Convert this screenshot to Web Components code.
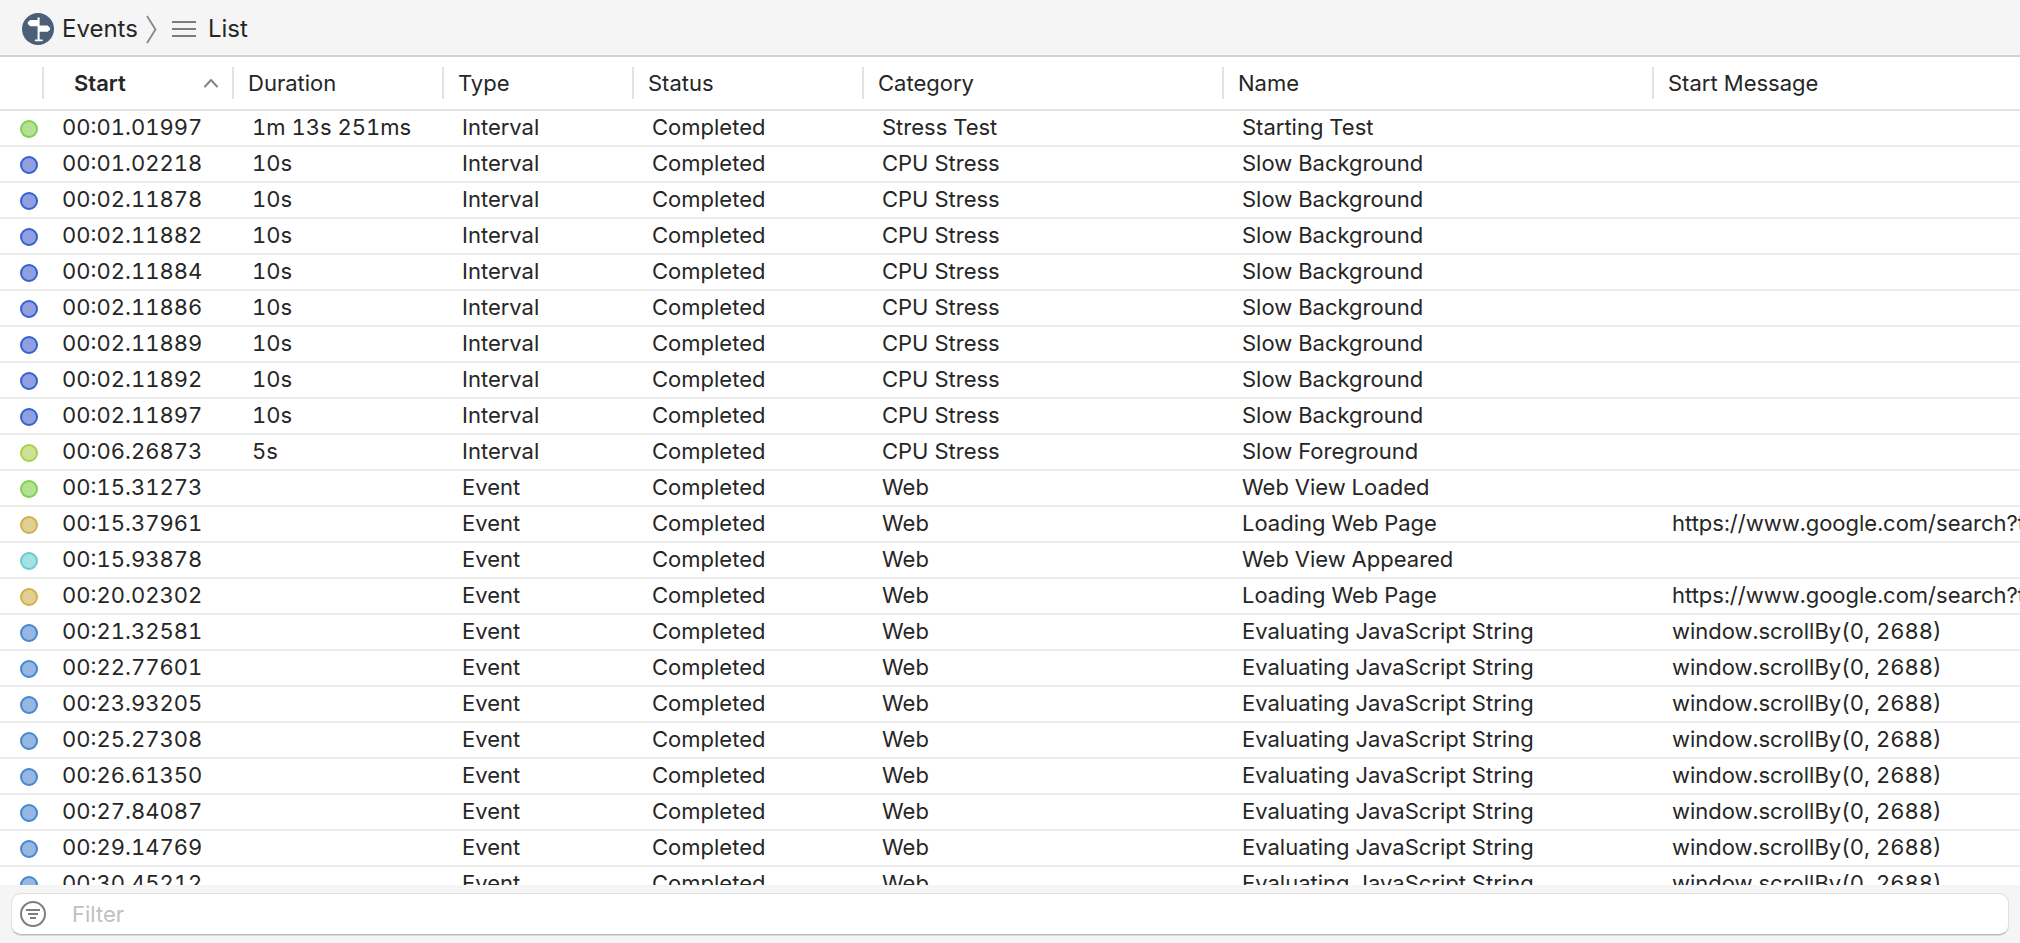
<!DOCTYPE html>
<html lang="en">
<head>
<meta charset="utf-8">
<title>Events – List</title>
<style>
  html, body { height: 100%; margin: 0; }
  body {
    font: 22px/28px Inter, "Liberation Sans", sans-serif;
    color: #262626;
    background: #fff;
  }
</style>
</head>
<body>
<event-window>
  <crumb-bar slot="top">
    <crumb-item href="#events" label="Events">
      <signpost-icon></signpost-icon>
    </crumb-item>
    <crumb-item href="#list" label="List">
      <lines-icon></lines-icon>
    </crumb-item>
  </crumb-bar>
  <event-table></event-table>
  <filter-bar slot="bottom"></filter-bar>
</event-window>

<script>
  class BaseElement extends HTMLElement {
    constructor() {
      super();
      this.attachShadow({ mode: "open" });
    }
    connectedCallback() {
      this.shadowRoot.innerHTML = this.render();
    }
  }

  customElements.define("event-window", class extends BaseElement {
    render() {
      return `
        <style>
          :host { display: flex; flex-direction: column; height: 100vh; }
          main { flex: 1; min-height: 0; overflow: auto; scrollbar-width: none; }
        </style>
        <slot name="top"></slot>
        <main><slot></slot></main>
        <slot name="bottom"></slot>`;
    }
  });

  customElements.define("crumb-bar", class extends BaseElement {
    render() {
      return `
        <style>
          :host { display: block; background: #f5f5f5; border-bottom: 2px solid #d2d2d2; }
          nav { display: flex; align-items: center; padding: 13px 22px 10px; }
        </style>
        <nav aria-label="Path"><slot></slot></nav>`;
    }
  });

  customElements.define("crumb-item", class extends BaseElement {
    render() {
      return `
        <style>
          :host { display: flex; align-items: center; font-size: 24px; }
          :host(:last-child) .next { display: none; }
          a { display: flex; align-items: center; gap: 8px; height: 32px; color: inherit; text-decoration: none; }
          .next { margin: 0 14px 0 8px; }
        </style>
        <a href="${this.getAttribute("href")}"><slot></slot><span>${this.getAttribute("label")}</span></a>
        <svg class="next" width="12" height="30" viewBox="0 0 12 30" fill="none" stroke="#868686" stroke-width="1.8" aria-hidden="true">
          <path d="M1 2 L9.5 15.5 L1 29"/>
        </svg>`;
    }
  });

  customElements.define("signpost-icon", class extends BaseElement {
    render() {
      return `
        <style>:host, svg { display: block; }</style>
        <svg width="32" height="32" viewBox="0 0 32 32" aria-hidden="true">
          <circle cx="16" cy="16" r="16" fill="#4a6079"/>
          <g fill="#fff" stroke="#fff" stroke-width="2" stroke-linejoin="round" stroke-linecap="round">
            <path d="M16 8 H8.6 L6.8 9.6 V10.6 L8.6 12.2 H16 Z"/>
            <path d="M17.4 13.6 H25.2 L27 15.2 V16.2 L25.2 17.8 H17.4 Z"/>
            <path fill="none" d="M16.6 5.2 V27"/>
            <path fill="none" stroke-width="1.6" d="M13.6 27.4 H20"/>
          </g>
        </svg>`;
    }
  });

  customElements.define("lines-icon", class extends BaseElement {
    render() {
      return `
        <style>:host { display: block; margin-right: 4px; } svg { display: block; }</style>
        <svg width="24" height="18" viewBox="0 0 24 18" fill="#7b7b7b" aria-hidden="true">
          <path d="M0 1h24v2H0zM0 8h24v2H0zM0 15h24v2H0z"/>
        </svg>`;
    }
  });

  customElements.define("event-dot", class extends BaseElement {
    render() {
      const [fill, ring] = {
        green: ["#b3e294", "#7fd04b"],
        indigo: ["#909fdf", "#3560d0"],
        lime: ["#cde294", "#a9d04b"],
        gold: ["#e2cf94", "#d0b04b"],
        cyan: ["#a2e2e2", "#62cdd0"],
        blue: ["#95b7e2", "#4487d0"]
      }[this.getAttribute("tone")];
      return `
        <style>
          :host {
            display: block; box-sizing: border-box; width: 18px; height: 18px;
            border: 2px solid ${ring}; border-radius: 50%; background: ${fill};
          }
        </style>`;
    }
  });

  const cpu = start => ["indigo", start, "10s", "Interval", "Completed", "CPU Stress", "Slow Background", ""];
  const web = (tone, start, name, message = "") => [tone, start, "", "Event", "Completed", "Web", name, message];
  const script = start => web("blue", start, "Evaluating JavaScript String", "window.scrollBy(0, 2688)");

  const EVENTS = [
    ["green", "00:01.01997", "1m 13s 251ms", "Interval", "Completed", "Stress Test", "Starting Test", ""],
    ...["00:01.02218", "00:02.11878", "00:02.11882", "00:02.11884", "00:02.11886",
        "00:02.11889", "00:02.11892", "00:02.11897"].map(cpu),
    ["lime", "00:06.26873", "5s", "Interval", "Completed", "CPU Stress", "Slow Foreground", ""],
    web("green", "00:15.31273", "Web View Loaded"),
    web("gold", "00:15.37961", "Loading Web Page", "https://www.google.com/search?t"),
    web("cyan", "00:15.93878", "Web View Appeared"),
    web("gold", "00:20.02302", "Loading Web Page", "https://www.google.com/search?t"),
    ...["00:21.32581", "00:22.77601", "00:23.93205", "00:25.27308", "00:26.61350",
        "00:27.84087", "00:29.14769", "00:30.45212"].map(script)
  ];

  customElements.define("event-table", class extends BaseElement {
    render() {
      const heads = ["Duration", "Type", "Status", "Category", "Name", "Start Message"];
      const widths = [44, 190, 210, 190, 230, 360, 430];
      return `
        <style>
          :host { display: block; }
          table { width: 100%; table-layout: fixed; border-collapse: separate; border-spacing: 0; }
          th, td { box-sizing: border-box; padding: 0; text-align: left; white-space: nowrap; overflow: hidden; }
          th {
            position: sticky; top: 0; z-index: 1; height: 54px; font-weight: 400;
            border-bottom: 2px solid #e4e4e4;
            background: linear-gradient(#e2e2e2, #e2e2e2) right center / 2px 32px no-repeat #fff;
          }
          th:last-child { background: #fff; }
          button {
            display: flex; align-items: center; justify-content: space-between;
            box-sizing: border-box; width: 100%; padding: 0 16px 0 14px;
            border: 0; background: none; font: inherit; color: inherit; text-align: left;
          }
          [aria-sort] button { padding-left: 30px; font-weight: 600; }
          td { height: 36px; padding: 0 0 2px 18px; border-bottom: 2px solid #ebebeb; font-variant-numeric: tabular-nums; }
          td:first-child { padding: 1px 0 0 20px; }
        </style>
        <table>
          <colgroup>${widths.map(w => `<col style="width:${w}px">`).join("")}<col></colgroup>
          <thead>
            <tr>
              <th></th>
              <th scope="col" aria-sort="ascending">
                <button type="button">Start
                  <svg width="14" height="10" viewBox="0 0 14 10" fill="none" stroke="#858585" stroke-width="2" stroke-linecap="round" stroke-linejoin="round" aria-hidden="true"><path d="M1 8.5 L7 2 L13 8.5"/></svg>
                </button>
              </th>
              ${heads.map(h => `<th scope="col"><button type="button">${h}</button></th>`).join("")}
            </tr>
          </thead>
          <tbody>
            ${EVENTS.map(([tone, ...cells]) => `
              <tr><td><event-dot tone="${tone}"></event-dot></td>${cells.map(c => `<td>${c}</td>`).join("")}</tr>`).join("")}
          </tbody>
        </table>`;
    }
  });

  customElements.define("filter-bar", class extends BaseElement {
    render() {
      return `
        <style>
          :host { display: block; padding: 8px 11px; background: #f5f5f5; }
          label {
            display: flex; align-items: center; gap: 26px; box-sizing: border-box; height: 42px;
            padding: 0 8px; border-radius: 10px; background: #fff;
            border: 1px solid #e0e0e0; border-bottom-color: #b9b9b9;
            box-shadow: 0 1px 0 #d8d8d8;
          }
          svg { flex: none; }
          input {
            flex: 1; min-width: 0; padding: 0; border: 0; outline: 0;
            background: none; font: inherit; color: inherit;
          }
          input::placeholder { color: #c1c1c1; opacity: 1; }
        </style>
        <label>
          <svg width="26" height="26" viewBox="0 0 26 26" fill="none" stroke="#7d7d7d" stroke-width="2" aria-hidden="true">
            <circle cx="13" cy="13" r="12"/>
            <path d="M6 9h14M8 13h10M10 17h6"/>
          </svg>
          <input type="text" placeholder="Filter" aria-label="Filter">
        </label>`;
    }
  });
</script>
</body>
</html>
